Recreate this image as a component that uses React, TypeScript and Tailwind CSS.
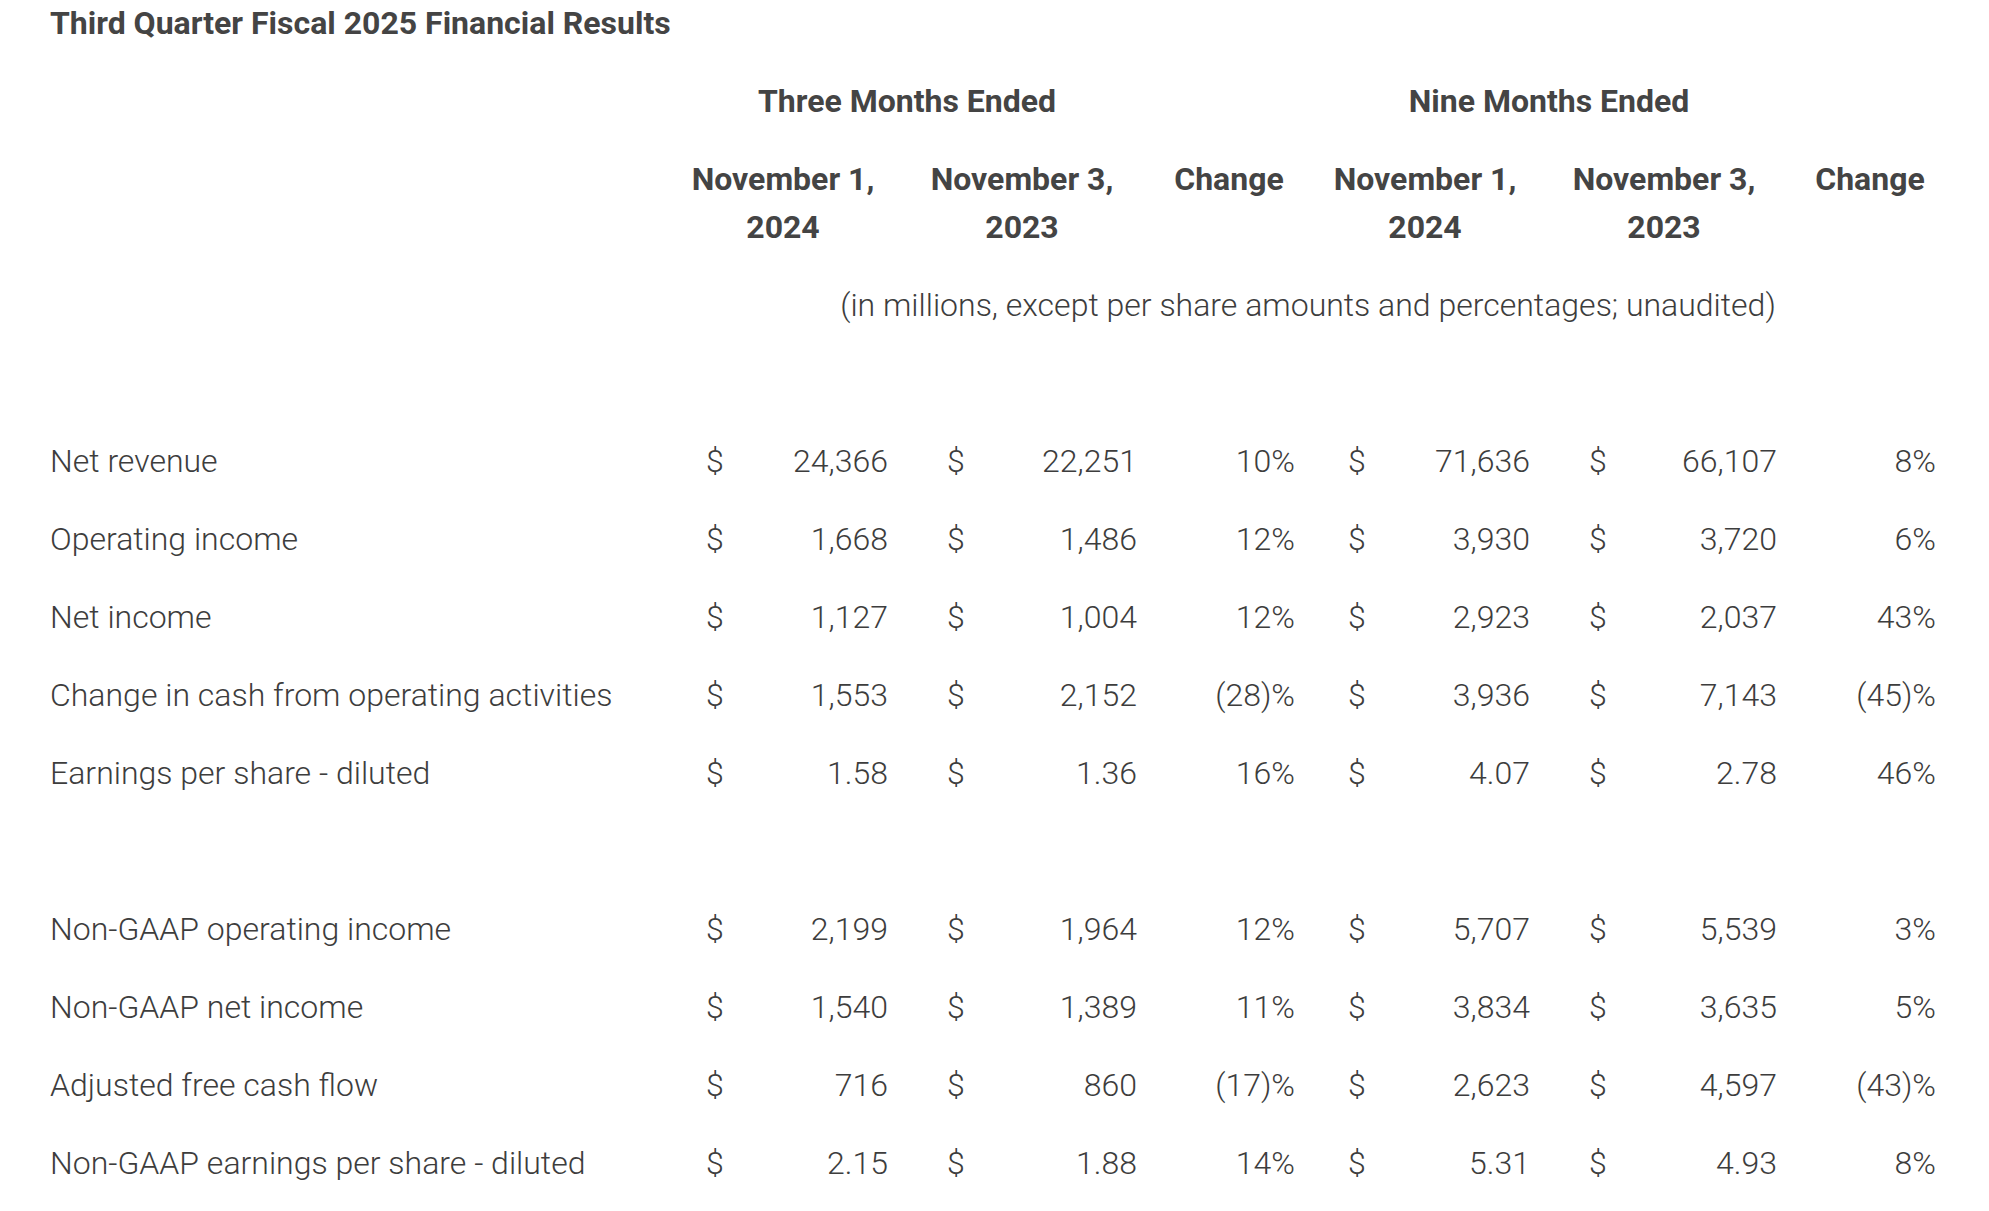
import React from 'react';

type Row = {
  label: string;
  q24: string;
  q23: string;
  qChange: string;
  n24: string;
  n23: string;
  nChange: string;
};

const gaapRows: Row[] = [
  { label: 'Net revenue', q24: '24,366', q23: '22,251', qChange: '10%', n24: '71,636', n23: '66,107', nChange: '8%' },
  { label: 'Operating income', q24: '1,668', q23: '1,486', qChange: '12%', n24: '3,930', n23: '3,720', nChange: '6%' },
  { label: 'Net income', q24: '1,127', q23: '1,004', qChange: '12%', n24: '2,923', n23: '2,037', nChange: '43%' },
  { label: 'Change in cash from operating activities', q24: '1,553', q23: '2,152', qChange: '(28)%', n24: '3,936', n23: '7,143', nChange: '(45)%' },
  { label: 'Earnings per share - diluted', q24: '1.58', q23: '1.36', qChange: '16%', n24: '4.07', n23: '2.78', nChange: '46%' },
];

const nonGaapRows: Row[] = [
  { label: 'Non-GAAP operating income', q24: '2,199', q23: '1,964', qChange: '12%', n24: '5,707', n23: '5,539', nChange: '3%' },
  { label: 'Non-GAAP net income', q24: '1,540', q23: '1,389', qChange: '11%', n24: '3,834', n23: '3,635', nChange: '5%' },
  { label: 'Adjusted free cash flow', q24: '716', q23: '860', qChange: '(17)%', n24: '2,623', n23: '4,597', nChange: '(43)%' },
  { label: 'Non-GAAP earnings per share - diluted', q24: '2.15', q23: '1.88', qChange: '14%', n24: '5.31', n23: '4.93', nChange: '8%' },
];

const Money: React.FC<{ value: string; width: string }> = ({ value, width }) => (
  <div className={`flex justify-between ${width}`}>
    <span>$</span>
    <span>{value}</span>
  </div>
);

const DataRow: React.FC<{ row: Row }> = ({ row }) => (
  <div className="flex h-[78px] items-center leading-[78px]">
    <div className="w-[656px] whitespace-nowrap">{row.label}</div>
    <Money value={row.q24} width="w-[182px]" />
    <div className="w-[59px]" />
    <Money value={row.q23} width="w-[190px]" />
    <div className="w-[158px] text-right">{row.qChange}</div>
    <div className="w-[53px]" />
    <Money value={row.n24} width="w-[182px]" />
    <div className="w-[59px]" />
    <Money value={row.n23} width="w-[188px]" />
    <div className="w-[159px] text-right">{row.nChange}</div>
  </div>
);

const DateHead: React.FC<{ day: string; year: string; width: string }> = ({ day, year, width }) => (
  <div className={`${width} text-center`}>
    <div>{day}</div>
    <div>{year}</div>
  </div>
);

export default function App() {
  return (
    <div className="min-h-screen bg-white pl-[50px] text-[#444444]" style={{ fontFamily: 'Roboto, "Noto Sans", sans-serif' }}>
      <h1 className="text-[32px] font-bold leading-[46px]">Third Quarter Fiscal 2025 Financial Results</h1>

      {/* period headers */}
      <div className="mt-[31px] flex text-[32px] font-bold leading-[48px]">
        <div className="w-[640px]" />
        <div className="w-[434px] text-center">Three Months Ended</div>
        <div className="w-[850px] text-center">Nine Months Ended</div>
      </div>

      <div className="mt-[30px] flex text-[32px] font-bold leading-[48px]">
        <div className="w-[640px]" />
        <DateHead day="November 1," year="2024" width="w-[186px]" />
        <DateHead day="November 3," year="2023" width="w-[292px]" />
        <div className="w-[122px] text-center">Change</div>
        <DateHead day="November 1," year="2024" width="w-[270px]" />
        <DateHead day="November 3," year="2023" width="w-[208px]" />
        <div className="w-[204px] text-center">Change</div>
      </div>

      <div className="mt-[30px] flex text-[32px] font-light leading-[48px] text-[#3d3d3d]">
        <div className="w-[640px]" />
        <div className="w-[1236px] whitespace-nowrap text-center">(in millions, except per share amounts and percentages; unaudited)</div>
      </div>

      <div className="mt-[93px] text-[32px] font-light text-[#3d3d3d]">
        {gaapRows.map((r) => (
          <DataRow key={r.label} row={r} />
        ))}
        <div className="h-[78px]" />
        {nonGaapRows.map((r) => (
          <DataRow key={r.label} row={r} />
        ))}
      </div>
    </div>
  );
}
